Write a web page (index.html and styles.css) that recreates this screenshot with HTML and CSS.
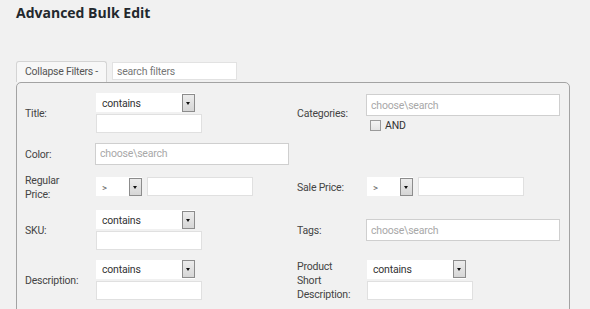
FILE: index.html
```html
<!DOCTYPE html>
<html>
<head>
<meta charset="utf-8">
<link rel="stylesheet" href="styles.css">
</head>
<body>
<div class="page">
  <h1 class="title">Advanced Bulk Edit</h1>
  <div class="toolbar">
    <button class="collapse">Collapse Filters -</button>
    <input class="search" type="text" placeholder="search filters">
  </div>
  <div class="panel">
    <div class="grid">
      <span class="lbl">Title:</span>
      <div class="stack">
        <div class="sel sel-wide"><span class="sel-text">contains</span><span class="sel-arrow"></span></div>
        <input class="txt" type="text">
      </div>
      <span class="lbl">Categories:</span>
      <div class="stack">
        <input class="choose" type="text" placeholder="choose\search">
        <span class="chk"><span class="box"></span>AND</span>
      </div>

      <span class="lbl">Color:</span>
      <div class="stack">
        <input class="choose" type="text" placeholder="choose\search">
      </div>
      <span class="lbl"></span>
      <div></div>

      <span class="lbl">Regular Price:</span>
      <div class="pair">
        <div class="sel sel-narrow"><span class="sel-text gt">&gt;</span><span class="sel-arrow"></span></div>
        <input class="txt" type="text">
      </div>
      <span class="lbl">Sale Price:</span>
      <div class="pair">
        <div class="sel sel-narrow"><span class="sel-text gt">&gt;</span><span class="sel-arrow"></span></div>
        <input class="txt" type="text">
      </div>

      <span class="lbl">SKU:</span>
      <div class="stack">
        <div class="sel sel-wide"><span class="sel-text">contains</span><span class="sel-arrow"></span></div>
        <input class="txt" type="text">
      </div>
      <span class="lbl">Tags:</span>
      <div class="stack">
        <input class="choose" type="text" placeholder="choose\search">
      </div>

      <span class="lbl">Description:</span>
      <div class="stack">
        <div class="sel sel-wide"><span class="sel-text">contains</span><span class="sel-arrow"></span></div>
        <input class="txt" type="text">
      </div>
      <span class="lbl">Product Short Description:</span>
      <div class="stack">
        <div class="sel sel-wide"><span class="sel-text">contains</span><span class="sel-arrow"></span></div>
        <input class="txt" type="text">
      </div>
    </div>
  </div>
</div>
</body>
</html>
```
FILE: styles.css
```css
html, body {
  margin: 0;
  padding: 0;
  background: #f1f1f1;
  overflow: hidden;
}
body {
  font-family: Roboto, "Open Sans", sans-serif;
  font-size: 10.5px;
  letter-spacing: -0.2px;
  color: #444;
}
.page {
  padding-left: 16px;
}
.title {
  margin: 3px 0 0;
  font-family: "Open Sans", sans-serif;
  font-weight: 700;
  font-size: 14px;
  line-height: 20px;
  letter-spacing: 0;
  color: #23282d;
}
.toolbar {
  display: flex;
  align-items: flex-start;
  gap: 5px;
  margin-top: 38px;
  height: 21px;
}
.collapse {
  width: 91px;
  height: 21px;
  margin: 0;
  padding: 0 0 1px 8px;
  box-sizing: border-box;
  text-align: left;
  font-family: Roboto, "Open Sans", sans-serif;
  font-size: 10.5px;
  letter-spacing: -0.25px;
  color: #555;
  background: #f7f7f7;
  border: 1px solid #d4d4d4;
  border-bottom: none;
  border-radius: 3px 3px 0 0;
  white-space: nowrap;
}
.search {
  width: 125px;
  height: 18px;
  margin: 1px 0 0;
  padding: 0 4px;
  box-sizing: border-box;
  font-family: Roboto, "Open Sans", sans-serif;
  font-size: 10.5px;
  letter-spacing: -0.2px;
  background: #fff;
  border: 1px solid #e2e2e2;
  outline: none;
}
.search::placeholder {
  color: #777;
}
.panel {
  width: 554px;
  height: 300px;
  box-sizing: border-box;
  border: 1px solid #a3a3a3;
  border-radius: 5px;
}
.grid {
  display: grid;
  grid-template-columns: 71px 201px 70px 200px;
  grid-template-rows: 48px 33px 33px 54px 45px;
  align-items: center;
  padding: 6px 0 0 8px;
}
.lbl {
  width: 57px;
  padding-top: 2px;
  line-height: 14px;
  color: #444;
}
.stack {
  display: flex;
  flex-direction: column;
  align-items: flex-start;
  gap: 2px;
}
.pair {
  display: flex;
  align-items: center;
  gap: 5px;
}
.txt {
  display: block;
  width: 106px;
  height: 19px;
  margin: 0;
  padding: 0 4px;
  box-sizing: border-box;
  background: #fff;
  border: 1px solid #e0e0e0;
  outline: none;
}
.choose {
  display: block;
  width: 194px;
  height: 22px;
  margin: 0 0 0 -1px;
  padding: 0 4px;
  box-sizing: border-box;
  font-family: Roboto, "Open Sans", sans-serif;
  font-size: 10.5px;
  letter-spacing: -0.2px;
  background: #fff;
  border: 1px solid #cfcfcf;
  outline: none;
}
.choose::placeholder {
  color: #a8a8a8;
}
.sel {
  display: flex;
  align-items: center;
  height: 19px;
  box-sizing: border-box;
  background: #fff;
}
.sel-wide {
  width: 99px;
}
.sel-narrow {
  width: 46px;
}
.sel-text {
  flex: 1;
  padding: 1px 0 0 6px;
  color: #333;
}
.gt {
  color: #666;
  font-size: 9.5px;
}
.sel-arrow {
  position: relative;
  width: 13px;
  height: 18px;
  box-sizing: border-box;
  border: 1px solid #8c8c8c;
  background: linear-gradient(#ececec, #d6d6d6);
}
.sel-arrow::after {
  content: "";
  position: absolute;
  left: 3px;
  top: 7px;
  border-left: 2.5px solid transparent;
  border-right: 2.5px solid transparent;
  border-top: 3px solid #111;
}
.chk {
  display: flex;
  align-items: center;
  gap: 4px;
  margin: 1px 0 0 3px;
  color: #333;
  line-height: 13px;
}
.box {
  width: 11px;
  height: 11px;
  box-sizing: border-box;
  border: 1px solid #9a9a9a;
  background: linear-gradient(#f4f4f4, #e4e4e4);
}
```
